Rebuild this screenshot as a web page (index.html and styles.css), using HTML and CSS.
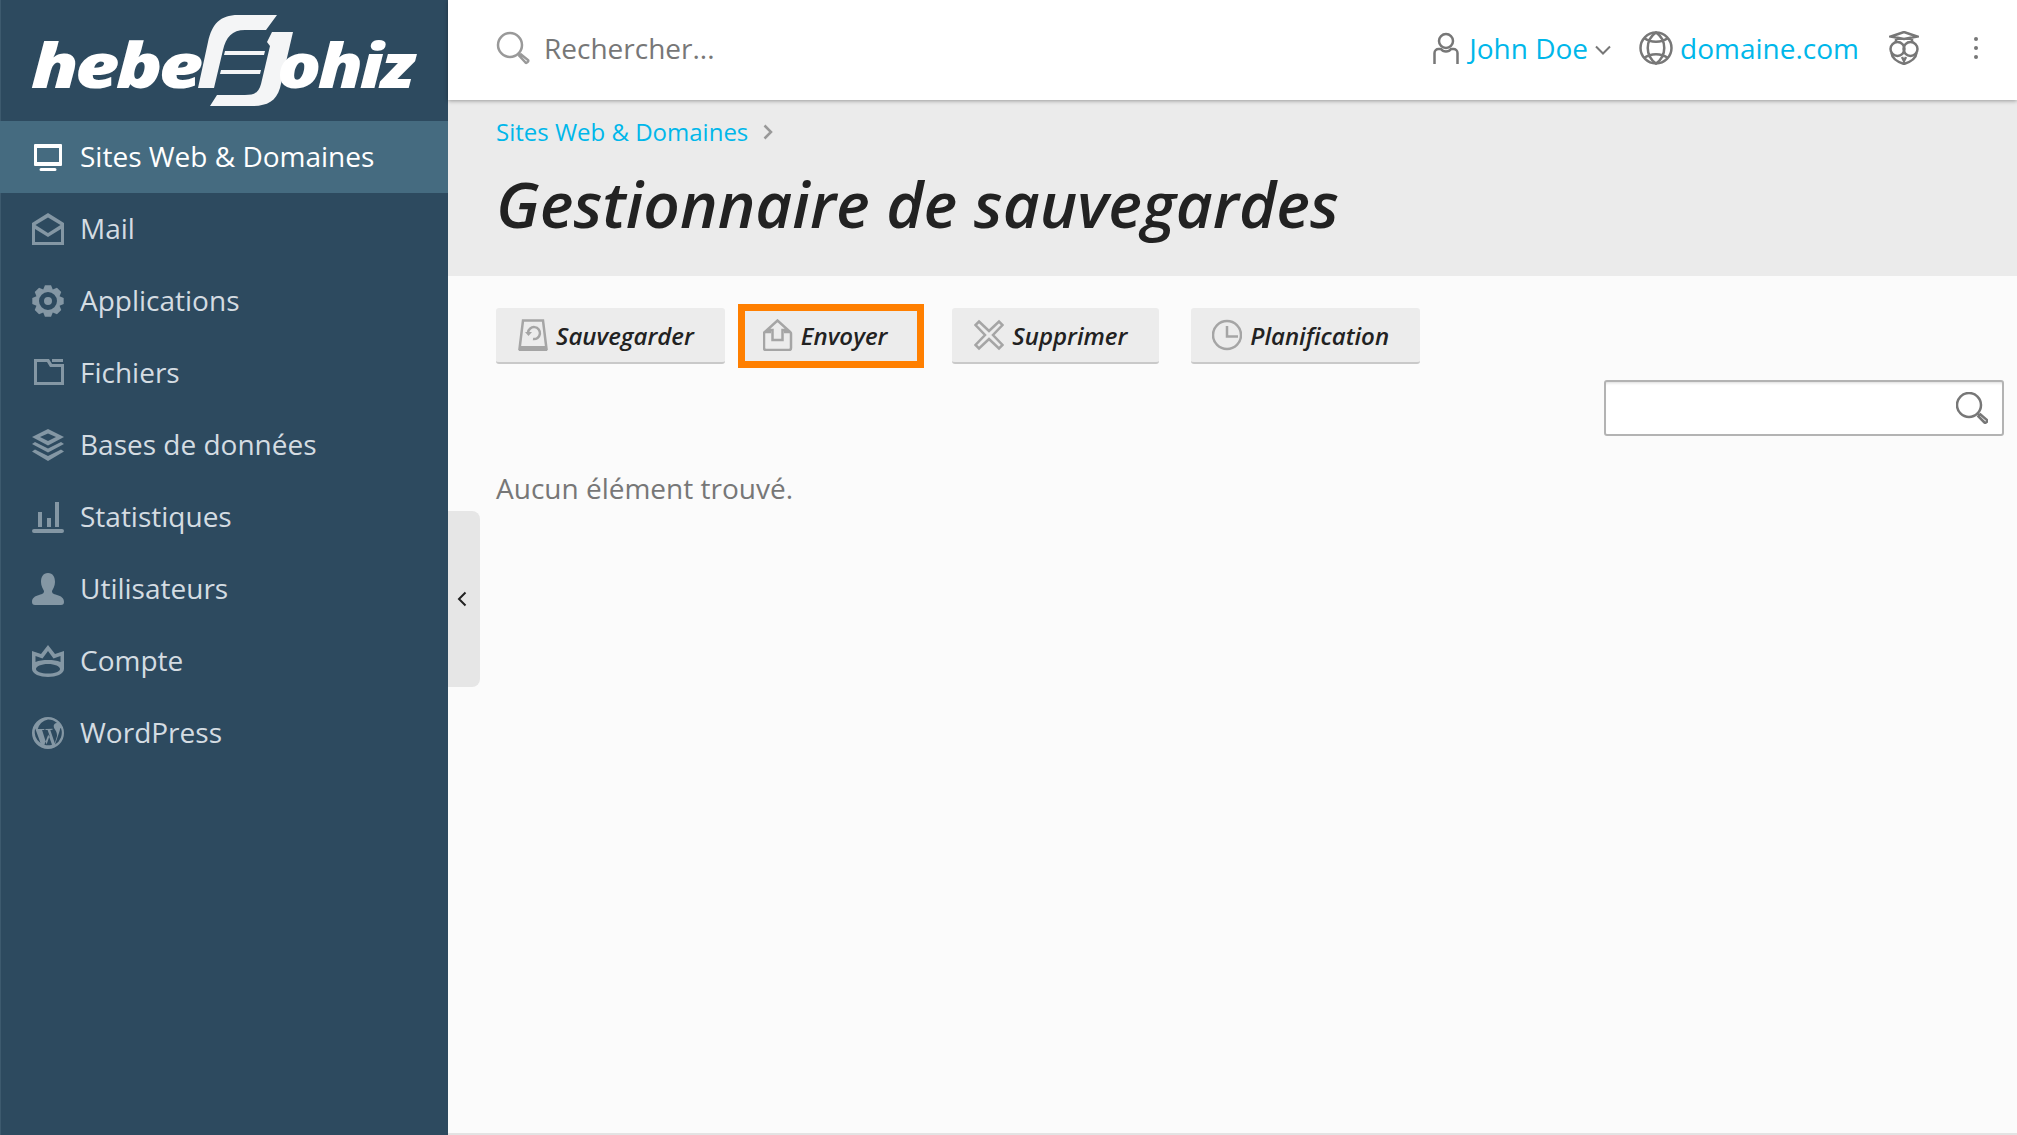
FILE: index.html
```html
<!DOCTYPE html>
<html lang="fr">
<head>
<meta charset="utf-8">
<title>Gestionnaire de sauvegardes</title>
<link rel="stylesheet" href="styles.css">
</head>
<body>
<div class="app">
  <aside class="sidebar">
    <div class="logo">
      <svg class="logo-svg" viewBox="0 0 448 121" width="448" height="121">
        <text class="logo-text" transform="translate(31 88) scale(1.24 1)">hebe</text>
        <path class="logo-mark" d="M277 15H238C220 15 212 24 208 42L198 88H214L223 50C226 37 232 30 245 30H266Z"/>
        <path class="logo-mark" d="M272 32H293L280 88C276 102 266 106 252 106H210L217 95H245C255 95 259 92 261 84L270 46 267 42Z"/>
        <path class="logo-mark" d="M225 51H265L264 55H224ZM221 70H261L260 74H220Z"/>
        <text class="logo-text" transform="translate(277 88) scale(1.18 1)">ohiz</text>
      </svg>
    </div>
    <nav class="nav">
      <a class="nav-item active"><svg class="nav-icon" viewBox="0 0 32 32"><path d="M3 3h26a1 1 0 0 1 1 1v20a1 1 0 0 1-1 1H3a1 1 0 0 1-1-1V4a1 1 0 0 1 1-1Zm2 4v14h22V7ZM9 27h14a1.500 1.500 0 0 1 0 3H9a1.500 1.500 0 0 1 0-3Z" fill-rule="evenodd"/></svg><span>Sites Web &amp; Domaines</span></a>
      <a class="nav-item"><svg class="nav-icon" viewBox="0 0 32 32"><path d="M16 0 32 10V32H0V10ZM16 4.500 3.500 12 16 20 28.500 12ZM3 16V29H29V16L16 24Z" fill-rule="evenodd"/></svg><span>Mail</span></a>
      <a class="nav-item"><svg class="nav-icon" viewBox="0 0 32 32"><path d="M19.050.3 20.780 4.450 24.950 2.740 29.260 7.050 27.550 11.220 31.700 12.950V19.050L27.550 20.780 29.260 24.950 24.950 29.260 20.780 27.550 19.050 31.700H12.950L11.220 27.550 7.050 29.260 2.740 24.950 4.450 20.780.3 19.050V12.950L4.450 11.220 2.740 7.050 7.050 2.740 11.220 4.450 12.950.3ZM16 7a9 9 0 1 0 0 18 9 9 0 0 0 0-18Zm0 5a4 4 0 1 1 0 8 4 4 0 0 1 0-8Z" fill-rule="evenodd"/></svg><span>Applications</span></a>
      <a class="nav-item"><svg class="nav-icon" viewBox="0 0 32 32"><path d="M2 2H17L20 7H32V28H2ZM5 5V25H29V10H18L15 5ZM20 2H31V5H20Z" fill-rule="evenodd"/></svg><span>Fichiers</span></a>
      <a class="nav-item"><svg class="nav-icon" viewBox="0 0 32 32"><path d="M16 0 32 8 16 16.500 0 8ZM16 4.500 8 8 16 12 24 8ZM3 13 16 19.500 29 13 32 15 16 23.500 0 15ZM3 20.500 16 27 29 20.500 32 22.500 16 32 0 22.500Z" fill-rule="evenodd"/></svg><span>Bases de données</span></a>
      <a class="nav-item"><svg class="nav-icon" viewBox="0 0 32 32"><path d="M6 11h4v15H6ZM15 17h4v9h-4ZM23 1h4v25h-4ZM2 28h28a2 2 0 0 1 0 4H2a2 2 0 0 1 0-4Z"/></svg><span>Statistiques</span></a>
      <a class="nav-item"><svg class="nav-icon" viewBox="0 0 32 32"><path d="M16 0c5 0 7 4 7 9 0 4-2 7-3 9 0 2 1 3 5 4 4 1 7 3 7 7 0 2-1 3-3 3H3c-2 0-3-1-3-3 0-4 3-6 7-7 4-1 5-2 5-4-1-2-3-5-3-9 0-5 2-9 7-9Z"/></svg><span>Utilisateurs</span></a>
      <a class="nav-item"><svg class="nav-icon" viewBox="0 0 32 32"><path d="M16 0 23 9 32 6V24C32 29 24 32 16 32S0 29 0 24V6L9 9ZM16 6 10.500 13.500 3.500 11V17C7 15.500 11 15 16 15S25 15.500 28.500 17V11L21.500 13.500ZM16 19C9 19 4 21.500 4 24S9 28.500 16 28.500 28 26.500 28 24 23 19 16 19Z" fill-rule="evenodd"/></svg><span>Compte</span></a>
      <a class="nav-item"><svg class="nav-icon" viewBox="0 0 32 32"><path d="M16 0a16 16 0 1 0 0 32 16 16 0 0 0 0-32Zm0 2.500a13.500 13.500 0 0 1 9 3.400c-2-.1-3.300 1.600-3.300 3.200 0 1.800 1 3 2 4.700.8 1.300 1.300 2.800 1.300 5.100l-2.200 7.400-4.500-13.400 2.300-.2-.1-1-7 .2-.1 1 2.200.2 2 5.700-3 8.800-4.500-14.500 2.300-.2-.1-1-6.500.2A13.500 13.500 0 0 1 16 2.500ZM3.200 11.500l5.300 14.600A13.500 13.500 0 0 1 3.200 11.500Zm25.800-.2A13.500 13.500 0 0 1 23 27.500l3.700-10.700c.8-2.200 1.300-4 1.500-5.500ZM16.300 17.400l3.700 10.300a13.500 13.500 0 0 1-7.600.1Z" fill-rule="evenodd"/></svg><span>WordPress</span></a>
    </nav>
  </aside>
  <div class="main">
    <button class="collapse" type="button" aria-label="Réduire"><svg viewBox="0 0 10 16" width="10" height="16"><path class="line-dark" d="M8.500 1.500 2 8l6.500 6.500"/></svg></button>
    <header class="topbar">
      <div class="global-search">
        <svg class="i-search" viewBox="0 0 34 34"><circle class="line-light" cx="14" cy="14" r="12"/><path class="line-light" d="M22.500 23 25 25.500M25 23.500l-1.500 1.500 6 6.500c1 1 3.500-1 2.500-2.500Z"/></svg>
        <span>Rechercher...</span>
      </div>
      <div class="top-actions">
        <a class="top-link user"><svg class="i-user" viewBox="0 0 26 32"><circle class="line" cx="13" cy="9" r="7"/><path class="line" d="M1.500 32V21c0-2.500 2-4 4-4H8c1 1.500 3 2.500 5 2.500s4-1 5-2.500h2.500c2 0 4 1.500 4 4v11"/></svg><span>John Doe</span><svg class="i-chev" viewBox="0 0 16 10"><path class="line thin" d="M1 1.500 8 8.500l7-7"/></svg></a>
        <a class="top-link domain"><svg class="i-globe" viewBox="0 0 34 34"><circle class="line" cx="17" cy="17" r="15.500"/><path class="line" d="M17 1.500C6 9 6 25 17 32.500 28 25 28 9 17 1.500ZM5 7c7 5 17 5 24 0M5 27c7-5 17-5 24 0"/></svg><span>domaine.com</span></a>
        <svg class="i-owl" viewBox="0 0 30 34"><path class="line" d="M15 1 28 5.500 15 8 2 5.500ZM7 7v5M23 7v5"/><circle class="line" cx="8.500" cy="18" r="7"/><circle class="line" cx="21.500" cy="18" r="7"/><path class="line" d="M2.500 22C3 28 9 31 15 33c6-2 12-5 12.500-11M13 26l2 4 2-4"/></svg>
        <svg class="i-dots" viewBox="0 0 6 24"><circle cx="3" cy="3" r="2"/><circle cx="3" cy="12" r="2"/><circle cx="3" cy="21" r="2"/></svg>
      </div>
    </header>
    <section class="band">
      <div class="crumbs"><a>Sites Web &amp; Domaines</a><svg class="i-crumb" viewBox="0 0 10 16"><path class="line-light" d="M1.500 1.500 8 8l-6.500 6.500"/></svg></div>
      <h1>Gestionnaire de sauvegardes</h1>
    </section>
    <section class="content">
      <div class="toolbar">
        <button class="btn btn-first" type="button"><svg class="btn-icon" viewBox="0 0 30 32"><path class="line-btn" d="M5 1.500H25L28.500 30H1.500Z"/><path class="fill-btn" d="M1 27H29V32H1Z"/><path class="line-btn" d="M10 13.500 A6 6 0 1 1 15 20"/><path class="fill-btn" d="M7 13h7l-3.500 4Z"/></svg><span>Sauvegarder</span></button>
        <button class="btn btn-marked" type="button"><svg class="btn-icon" viewBox="0 0 30 32"><path class="line-btn" d="M8 13H2.500a1.500 1.500 0 0 0-1.500 1.500V29a2 2 0 0 0 2 2h23a2 2 0 0 0 2-2V14.500a1.500 1.500 0 0 0-1.500-1.500H21M9.500 21V11H4L14.500 1.500 25 11h-5.500V21Z"/></svg><span>Envoyer</span></button>
        <button class="btn" type="button"><svg class="btn-icon" viewBox="0 0 30 30"><path class="line-btn" d="M5 1.500 15 11 25 1.500 28.500 5 19 15l9.500 10-3.500 3.500-10-9.500-10 9.500L1.500 25 11 15 1.500 5Z"/></svg><span>Supprimer</span></button>
        <button class="btn btn-last" type="button"><svg class="btn-icon" viewBox="0 0 30 30"><circle class="line-btn" cx="15" cy="15" r="14"/><path class="line-btn" d="M15 6V16.500H26"/></svg><span>Planification</span></button>
      </div>
      <div class="filter-row">
        <div class="filter">
          <svg class="i-filter" viewBox="0 0 32 32"><circle class="line" cx="13" cy="13" r="12"/><path class="line" d="M22 22 24 24M24.500 22.500l-2 2 6 6c1 1 3.500-1 2.500-2.500Z"/></svg>
        </div>
      </div>
      <p class="empty">Aucun élément trouvé.</p>
    </section>
  </div>
</div>
</body>
</html>
```
FILE: styles.css
```css
* { box-sizing: border-box; }
html, body { margin: 0; height: 100%; overflow: hidden; }
body { font-family: "Open Sans", "Liberation Sans", sans-serif; color: #222; background: #fbfbfb; }
.app { display: flex; height: 100vh; }

.sidebar { width: 448px; flex: none; background: #2d4a5f; border-left: 1px solid #3d5a6e; }
.logo { height: 121px; margin-left: -1px; }
.logo-svg { display: block; }
.logo-text { font-family: "Open Sans", sans-serif; font-weight: 800; font-style: italic; font-size: 62px; letter-spacing: -3px; fill: #fff; }
.logo-mark { fill: #f4f5f6; }
.nav { display: flex; flex-direction: column; }
.nav-item { height: 72px; margin-left: -1px; padding: 0 0 2px 32px; display: flex; align-items: center; gap: 16px; font-size: 28px; color: #d4dce2; }
.nav-item.active { background: #456b80; color: #fff; }
.nav-icon { width: 32px; height: 32px; fill: #8497a4; flex: none; margin-top: 2px; }
.active .nav-icon { fill: #fff; }

.main { position: relative; flex: 1; min-width: 0; display: flex; flex-direction: column; }
.collapse { position: absolute; left: 0; top: 511px; width: 32px; height: 176px; border: 0; padding: 0 0 0 9px; background: #e6e6e6; border-radius: 0 8px 8px 0; display: flex; align-items: center; z-index: 2; }

.topbar { height: 100px; flex: none; background: #fff; box-shadow: 0 1px 4px rgba(0,0,0,.35); position: relative; z-index: 1; display: flex; align-items: center; justify-content: space-between; padding: 0 38px 4px 48px; }
.global-search { display: flex; align-items: center; gap: 14px; font-size: 28px; color: #777; }
.i-search { width: 34px; height: 34px; }
.top-actions { display: flex; align-items: center; }
.top-link { display: flex; align-items: center; font-size: 28px; color: #00b7ea; }
.i-user { width: 26px; height: 32px; margin-right: 10px; }
.i-chev { width: 16px; height: 10px; margin-left: 7px; margin-top: 4px; }
.domain { margin-left: 28px; }
.i-globe { width: 34px; height: 34px; margin-right: 7px; }
.i-owl { width: 30px; height: 34px; margin-left: 30px; }
.i-dots { width: 6px; height: 24px; fill: #777; margin-left: 54px; }

.line, .line-light, .line-dark, .line-btn { fill: none; stroke-width: 2.500; }
.line { stroke: #777; }
.line.thin { stroke-width: 2; }
.line-light { stroke: #999; }
.line-dark { stroke: #222; stroke-width: 2; }
.line-btn { stroke: #a5a5a5; }
.fill-btn { fill: #a5a5a5; }

.band { height: 176px; flex: none; background: #ebebeb; padding: 16px 0 0 48px; }
.crumbs { display: flex; align-items: center; gap: 15px; font-size: 24px; line-height: 32px; color: #00b7ea; }
.i-crumb { width: 10px; height: 16px; }
h1 { margin: 14px 0 0; font-size: 63.800px; line-height: 84px; font-weight: 600; font-style: italic; color: #222; }

.content { flex: 1; padding: 28px 13px 0 48px; border-bottom: 2px solid #e3e3e3; }
.toolbar { display: flex; align-items: center; height: 64px; }
.btn { height: 56px; margin-right: 32px; padding: 0 32px 0 22px; display: flex; align-items: center; gap: 8px; border: 0; border-bottom: 2px solid #c9c9c9; border-radius: 3px; background: #ececec; font-family: inherit; font-size: 24px; font-weight: 600; font-style: italic; color: #222; }
.btn-first { margin-right: 13px; padding-right: 31px; }
.btn-last { padding-left: 21px; padding-right: 31px; }
.btn-marked { height: 64px; margin-right: 28px; padding: 0 30px 2px 18px; border: 7px solid #ff7f00; border-radius: 0; }
.btn-icon { width: 30px; height: 32px; flex: none; }
.filter-row { display: flex; justify-content: flex-end; margin-top: 12px; }
.filter { width: 400px; height: 56px; padding-right: 14px; background: #fff; border: 2px solid #b3b3b3; border-radius: 3px; box-shadow: inset 0 3px 3px -2px rgba(0,0,0,.15); display: flex; align-items: center; justify-content: flex-end; }
.i-filter { width: 32px; height: 32px; }
.empty { margin: 33px 0 0; font-size: 28px; line-height: 38px; color: #777; }
```
